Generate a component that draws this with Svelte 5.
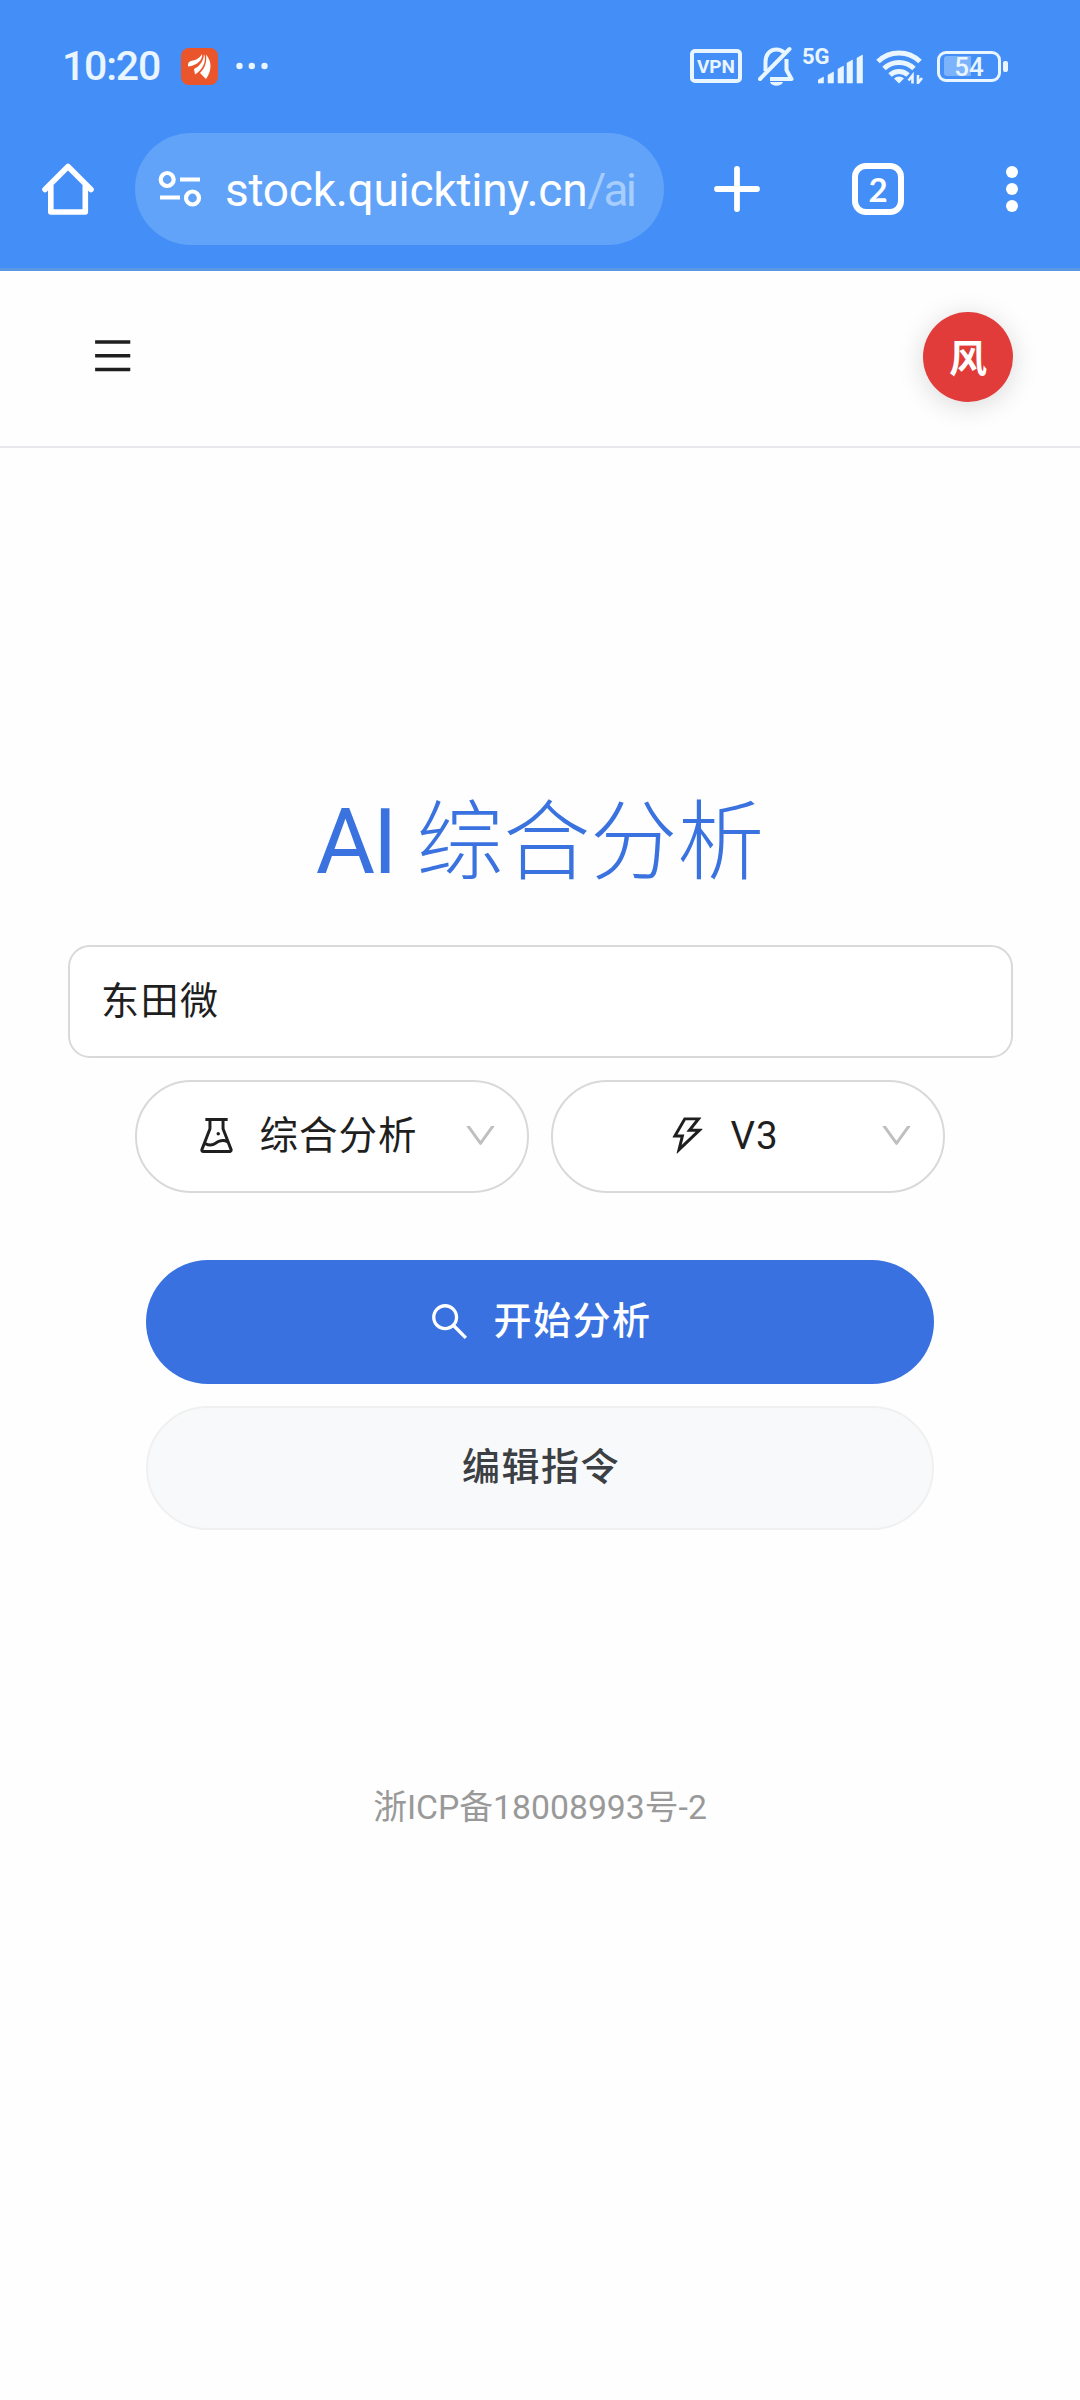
<script lang="ts">
  let stock = '东田微';
  const host = 'stock.quicktiny.cn';
  const path = '/ai';
  const bars = [
    { x: 0, h: 6 },
    { x: 10, h: 11 },
    { x: 20, h: 17 },
    { x: 29, h: 23 },
    { x: 39, h: 28 }
  ];
  const down =
    'M884 256h-75c-5.1 0-9.9 2.5-12.9 6.6L512 654.2 227.9 262.6c-3-4.1-7.8-6.6-12.9-6.6h-75c-6.5 0-10.3 7.4-6.5 12.7l352.6 486.1c12.8 17.6 39 17.6 51.7 0l352.6-486.1c3.9-5.3.1-12.7-6.4-12.7z';
  const selects = [
    {
      label: '综合分析',
      cjk: true,
      icon: 'M512 472a40 40 0 1080 0 40 40 0 10-80 0zm367 352.9L696.3 352V178H768v-68H256v68h71.7v174L145 824.9c-2.8 7.4-4.3 15.2-4.3 23.1 0 35.3 28.7 64 64 64h614.6c7.9 0 15.7-1.5 23.1-4.3 33-12.7 49.4-49.8 36.6-82.8zM395.7 364.7V180h232.6v184.7L719.2 600c-20.7-5.3-42.1-8-63.9-8-61.2 0-119.2 21.5-165.3 60a188.78 188.78 0 01-121.3 43.9c-32.7 0-64.1-8.3-91.8-23.7l118.8-307.5zM210.5 844l41.7-107.8c35.7 18.1 75.4 27.8 116.6 27.8 61.2 0 119.2-21.5 165.3-60 33.9-28.2 76.3-43.9 121.3-43.9 35 0 68.4 9.5 97.6 27.1L813.5 844h-603z'
    },
    {
      label: 'V3',
      cjk: false,
      icon: 'M848 359.3H627.7L825.8 109c4.1-5.3.4-13-6.3-13H436c-2.8 0-5.5 1.5-6.9 4L170 547.5c-3.1 5.3.7 12 6.9 12h174.4l-89.4 357.6c-1.9 7.8 7.5 13.3 13.3 7.7L853.5 373c5.2-4.9 1.7-13.7-5.5-13.7zM378.2 732.5l60.3-241H281.1l189.6-327.4h224.6L487 427.4h211L378.2 732.5z'
    }
  ];
</script>

<div class="screen">
  <div class="browser">
    <div class="status">
      <span class="clock">10:20</span>
      <svg class="app" width="37" height="37" viewBox="0 0 37 37">
        <rect width="37" height="37" rx="8" fill="#ea552b" />
        <path fill="#fff" d="M7 17c0-3 2-4 5-4.500 4-.8 7-3 9-6.500 1 5-4 11.500-14 12.500zM13 21c6-3 9.500-8 10-15 3 6-1 16-9 20.500zM19 25c5-5 7-11 6-18.500 6 7 6 16 0 24.500z" />
      </svg>
      <svg class="more" width="32" height="8" viewBox="0 0 32 8" fill="#e9f5ff">
        <circle cx="3.500" cy="4" r="3.200" /><circle cx="15.800" cy="4" r="3.200" /><circle cx="28.500" cy="4" r="3.200" />
      </svg>

      <span class="vpn">VPN</span>
      <svg class="bell" width="36" height="40" viewBox="0 0 36 40" fill="none" stroke="#e9f5ff" stroke-width="4" stroke-linejoin="round">
        <path d="M7.500 25V16c0-7 4-12.500 11-12.500 3 0 5.500 1 7.500 3M28.500 13v11l5 9H12" />
        <path d="M2 33 31.500 3" stroke-linecap="round" />
        <path d="M12 36h13c-1.500 5-11.500 5-13 0z" fill="#e9f5ff" stroke="none" />
      </svg>
      <div class="cell">
        <span>5G</span>
        <svg width="46" height="30" viewBox="0 0 46 30" fill="#e9f5ff">
          {#each bars as b}
            <path d="M{b.x} 29v{3 - b.h}l5.500-3v{b.h}z" stroke="#e9f5ff" stroke-width=".6" stroke-linejoin="round" />
          {/each}
        </svg>
      </div>
      <svg class="wifi" width="47" height="36" viewBox="0 0 47 36" fill="none" stroke="#e9f5ff" stroke-width="5">
        <path d="M2 13.500a30 30 0 0 1 42 0M8 20.500a21.500 21.500 0 0 1 30 0M14 27a13 13 0 0 1 18 0" />
        <path d="M18 30.500a7 7 0 0 1 10 0l-5 5z" fill="#e9f5ff" stroke="none" />
        <path d="M36.500 35.500v-8l-4 5M42 27v8l4-5" stroke-width="2.600" />
      </svg>
      <div class="battery"><i></i><span>54</span></div>
    </div>

    <div class="toolbar">
      <svg class="home" width="54" height="54" viewBox="0 0 54 54" fill="none" stroke="#fff" stroke-width="5.600" stroke-linecap="round" stroke-linejoin="round">
        <path d="M4 27.500 27 4.500 50 27.500M9.800 24v26h34.500V24" />
      </svg>
      <div class="address">
        <svg width="44" height="38" viewBox="0 0 44 38" fill="none" stroke="#fff" stroke-width="4.200">
          <circle cx="9.200" cy="9.500" r="6.500" /><path d="M22 9.500h20M2 27.500h20" /><circle cx="34.500" cy="28" r="6.500" />
        </svg>
        <span class="url">{host}<em>{path}</em></span>
      </div>
      <svg class="plus" width="46" height="46" viewBox="0 0 46 46" stroke="#fff" stroke-width="5.800" stroke-linecap="round">
        <path d="M23 3v40M3 23h40" />
      </svg>
      <span class="tabs">2</span>
      <svg class="dots" width="12" height="46" viewBox="0 0 12 46" fill="#fff">
        <circle cx="6" cy="6" r="6" /><circle cx="6" cy="23" r="6" /><circle cx="6" cy="40" r="6" />
      </svg>
    </div>
  </div>

  <header>
    <svg width="39.400" height="39.400" viewBox="64 64 896 896" fill="#1f1f1f">
      <path d="M904 160H120c-4.400 0-8 3.600-8 8v64c0 4.400 3.600 8 8 8h784c4.400 0 8-3.600 8-8v-64c0-4.400-3.600-8-8-8zm0 624H120c-4.400 0-8 3.600-8 8v64c0 4.400 3.600 8 8 8h784c4.400 0 8-3.600 8-8v-64c0-4.400-3.600-8-8-8zm0-312H120c-4.400 0-8 3.600-8 8v64c0 4.400 3.600 8 8 8h784c4.400 0 8-3.600 8-8v-64c0-4.400-3.600-8-8-8z" />
    </svg>
    <span class="avatar">风</span>
  </header>

  <main>
    <h1><span>AI</span> 综合分析</h1>
    <input type="text" aria-label="股票" bind:value={stock} />
    <div class="selects">
      {#each selects as s}
        <div class="select">
          <span class="value">
            <svg width="39" height="39" viewBox="64 64 896 896" fill="#1f1f1f"><path d={s.icon} /></svg>
            <span class:cjk={s.cjk}>{s.label}</span>
          </span>
          <svg width="33" height="33" viewBox="64 64 896 896" fill="#bfbfbf"><path d={down} /></svg>
        </div>
      {/each}
    </div>
    <button class="primary">
      <svg width="39" height="39" viewBox="64 64 896 896" fill="#fff">
        <path d="M909.600 854.500L649.900 594.800C690.200 542.700 712 479 712 412c0-80.200-31.300-155.400-87.900-212.100-56.600-56.700-132-87.900-212.100-87.900s-155.500 31.300-212.100 87.900C143.200 256.500 112 331.800 112 412c0 80.100 31.300 155.500 87.900 212.100C256.500 680.800 331.800 712 412 712c67 0 130.600-21.800 182.700-62l259.700 259.600a8.200 8.200 0 0011.600 0l43.600-43.500a8.200 8.200 0 000-11.600zM570.400 570.400C528 612.700 471.800 636 412 636s-116-23.300-158.400-65.600C211.300 528 188 471.800 188 412s23.300-116.100 65.600-158.400C296 211.300 352.200 188 412 188s116.100 23.200 158.400 65.600S636 352.200 636 412s-23.300 116.100-65.600 158.400z" />
      </svg>
      <span class="cjk">开始分析</span>
    </button>
    <button class="plain"><span class="cjk">编辑指令</span></button>
  </main>

  <footer>浙ICP备18008993号-2</footer>
</div>

<style>
  :global(body) { margin: 0; background: #fff; }
  .screen { width: 1080px; height: 2400px; overflow: hidden; background: #fefefe; color: #1f1f1f; font-family: Roboto, "Noto Sans CJK SC", sans-serif; }
  svg { display: block; flex: none; }
  .cjk { padding-bottom: 7px; }

  .browser { box-sizing: border-box; height: 271px; border-bottom: 3px solid #5b97e3; background: #448ef7; color: #fff; }
  .status { display: flex; align-items: center; height: 133px; box-sizing: border-box; padding: 0 0 1px 62px; color: #e9f5ff; }
  .clock { width: 119px; font: 500 41px/1 Roboto, sans-serif; letter-spacing: -1.2px; }
  .more { margin-left: 18px; }
  .vpn { box-sizing: border-box; width: 52px; height: 34px; margin-left: 422px; border: 4px solid #e9f5ff; border-radius: 5px; font: 700 19px/27px Roboto, sans-serif; text-align: center; }
  .bell { margin-left: 16px; }
  .cell { display: flex; align-items: flex-end; width: 61px; height: 36px; margin-left: 8px; }
  .cell span { width: 16px; align-self: flex-start; font: 700 22px/17px Roboto, sans-serif; white-space: nowrap; }
  .wifi { margin-left: 13px; }
  .battery { position: relative; box-sizing: border-box; width: 64px; height: 31px; margin-left: 14px; border: 3px solid #e9f5ff; border-radius: 9px; text-align: center; font: 500 26px/26px Roboto, sans-serif; }
  .battery::after { content: ""; position: absolute; right: -10px; top: 7px; width: 5px; height: 11px; border-radius: 2px; background: #e9f5ff; }
  .battery i { position: absolute; left: 4px; top: 2px; width: 27px; height: 20px; border-radius: 3px 0 0 3px; background: #7db3fb; }
  .battery span { position: relative; }

  .toolbar { display: flex; align-items: center; height: 112px; padding-left: 41px; }
  .address { display: flex; align-items: center; box-sizing: border-box; width: 529px; height: 112px; margin-left: 40px; padding-left: 23px; border-radius: 56px; background: #61a3f8; }
  .url { margin-left: 23px; padding-top: 2px; font: 400 46px/60px Roboto, sans-serif; letter-spacing: -.25px; white-space: nowrap; }
  .url em { color: #a6cdfc; font-style: normal; letter-spacing: -2.800px; }
  .plus { margin-left: 50px; }
  .tabs { box-sizing: border-box; width: 52px; height: 52px; margin-left: 92px; border: 6px solid #fff; border-radius: 14px; font: 700 33px/40px Lato, sans-serif; text-align: center; }
  .dots { margin-left: 102px; }

  header { display: flex; align-items: center; justify-content: space-between; box-sizing: border-box; height: 177px; padding: 0 67px 4px 93px; border-bottom: 2px solid #e8e8ec; }
  header svg { margin-bottom: 2px; }
  .avatar { width: 90px; height: 90px; border-radius: 50%; background: #e13c39; box-shadow: 0 4px 27px rgba(0, 0, 0, .15); color: #fff; font: 700 38px/88px "Noto Sans CJK SC", sans-serif; text-align: center; }

  main { display: flex; flex-direction: column; align-items: center; padding: 329px 68px 0; }
  h1 { height: 130px; margin: 0 0 38px; color: #3a72df; font-size: 87px; font-weight: 300; line-height: 130px; white-space: nowrap; }
  h1 span { font-size: 91px; font-weight: 400; letter-spacing: -2.500px; }
  input { align-self: flex-start; box-sizing: border-box; width: 945px; height: 113px; border: 2px solid #d9d9d9; border-radius: 22px; padding: 0 31px 8px; background: #fff; color: #1f1f1f; font: 38px "Noto Sans CJK SC", sans-serif; letter-spacing: 1.5px; outline: 0; }
  .selects { display: flex; gap: 22px; margin-top: 22px; }
  .select { display: flex; align-items: center; box-sizing: border-box; width: 394px; height: 113px; border: 2px solid #d9d9d9; border-radius: 57px; padding: 0 30px 2px 0; background: #fff; }
  .value { display: flex; flex: 1; align-items: center; justify-content: center; gap: 23px; padding-left: 14px; font-size: 38.500px; letter-spacing: 1px; }
  button { display: flex; align-items: center; justify-content: center; box-sizing: border-box; width: 788px; height: 124px; border: 0; border-radius: 62px; padding: 0 0 2px 2px; font: 500 38px Roboto, "Noto Sans CJK SC", sans-serif; letter-spacing: 1.5px; }
  .primary { gap: 24px; margin-top: 67px; background: #3972e0; color: #fff; }
  .plain { margin-top: 22px; border: 2px solid #f0f0f0; background: #f8f9fb; color: #3c3f43; }

  footer { margin-top: 252px; color: #999; font-size: 33.750px; line-height: 52px; text-align: center; }
</style>
